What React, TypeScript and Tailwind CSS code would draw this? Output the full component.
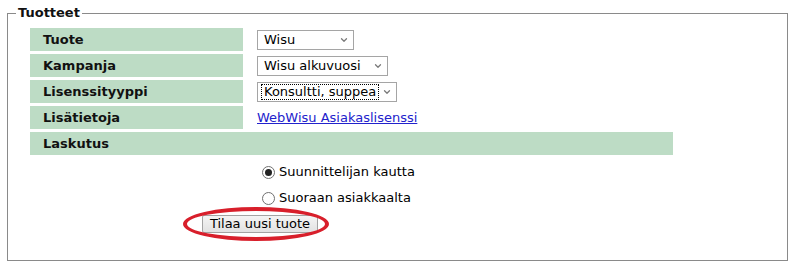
import { ChevronDown } from 'lucide-react';

function FakeSelect({
  value,
  width,
  focused,
}: {
  value: string;
  width: number;
  focused?: boolean;
}) {
  return (
    <div
      className="flex h-[20px] items-center justify-between border border-[#a5a5a5] bg-white pl-[3px] pr-[4px]"
      style={{ width }}
    >
      <span
        className={
          focused
            ? 'border border-dotted border-black bg-white px-[2px] leading-[14px] text-black'
            : 'px-[3px] leading-[14px] text-black'
        }
      >
        {value}
      </span>
      <ChevronDown className="h-[10px] w-[10px] text-[#7a7a7a]" strokeWidth={3} />
    </div>
  );
}

function Radio({ checked }: { checked?: boolean }) {
  return (
    <span className="ml-[5px] mr-[4px] flex h-[13px] w-[13px] items-center justify-center rounded-full border border-[#707070] bg-white">
      {checked && <span className="h-[7px] w-[7px] rounded-full bg-[#222]" />}
    </span>
  );
}

function Row({ label, children }: { label: string; children?: React.ReactNode }) {
  return (
    <div className="flex h-[23px] gap-[3px]">
      <div className="flex w-[213px] items-center bg-[#bddcc5] pl-[13px] font-bold text-[#111]">
        {label}
      </div>
      <div className="flex items-center pl-[11px]">{children}</div>
    </div>
  );
}

export default function App() {
  return (
    <div
      className="h-[266px] w-[792px] bg-white pt-[5px] text-[13px] text-black"
      style={{ fontFamily: '"DejaVu Sans", Verdana, sans-serif' }}
    >
      <fieldset className="ml-[7px] h-[256px] w-[781px] border border-[#8a8a8a] px-[8px]">
        <legend className="px-[2px] font-bold leading-[16px] text-[#111]">Tuotteet</legend>

        {/* Product table */}
        <div className="ml-[14px] mt-[7px] flex flex-col gap-[3px]">
          <Row label="Tuote">
            <FakeSelect value="Wisu" width={97} />
          </Row>
          <Row label="Kampanja">
            <FakeSelect value="Wisu alkuvuosi" width={131} />
          </Row>
          <Row label="Lisenssityyppi">
            <FakeSelect value="Konsultti, suppea" width={140} focused />
          </Row>
          <Row label="Lisätietoja">
            <a href="#" className="text-[#2222cc] underline">
              WebWisu Asiakaslisenssi
            </a>
          </Row>
          <div className="flex h-[23px] w-[643px] items-center bg-[#bddcc5] pl-[13px] font-bold text-[#111]">
            Laskutus
          </div>
        </div>

        {/* Billing options */}
        <div className="ml-[241px] mt-[4px] flex flex-col">
          <label className="flex h-[26px] items-center">
            <Radio checked />
            Suunnittelijan kautta
          </label>
          <label className="flex h-[26px] items-center">
            <Radio />
            Suoraan asiakkaalta
          </label>
        </div>

        <div className="ml-[186px] mt-[3px]">
          <div className="relative inline-block">
            <button className="h-[18px] w-[116px] rounded-[2px] border border-[#a3a3a3] bg-gradient-to-b from-[#f4f4f4] to-[#e2e2e2] leading-[14px] text-black">
              Tilaa uusi tuote
            </button>
            <div className="absolute left-[-19px] top-[-7px] h-[34px] w-[146px] rounded-[50%] border-[4px] border-[#d81f2b]" />
          </div>
        </div>
      </fieldset>
    </div>
  );
}
